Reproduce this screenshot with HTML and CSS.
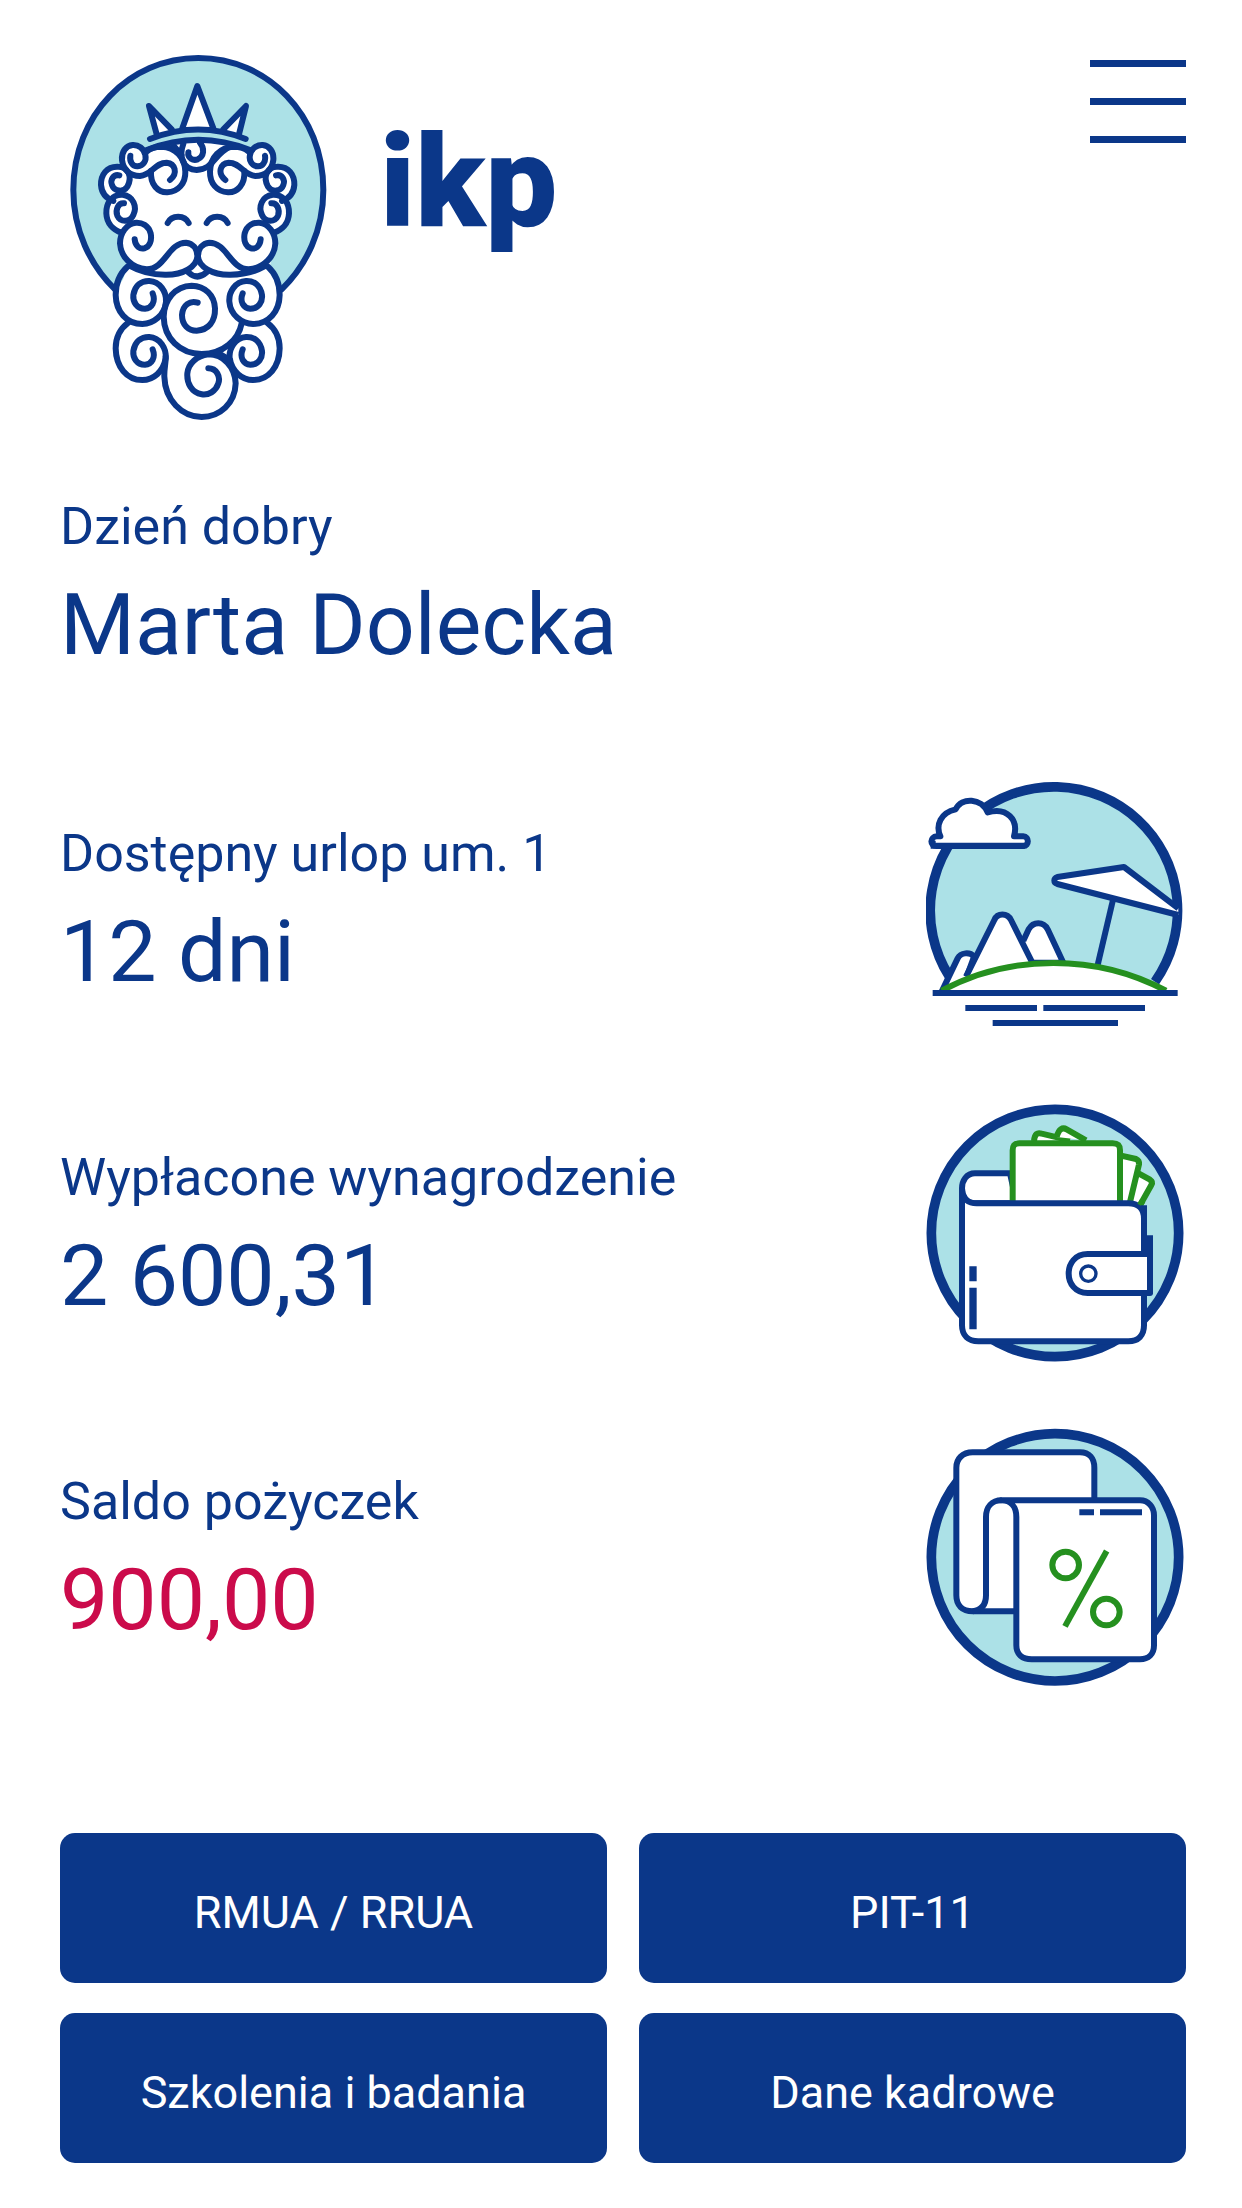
FILE: index.html
```
<!DOCTYPE html>
<html lang="pl">
<head>
    <meta charset="utf-8">
    <meta name="viewport" content="width=device-width, initial-scale=1">
    <title>ikp</title>
    <link rel="stylesheet" href="styles.css">
</head>
<body>
    <header class="header">
        <a class="brand" href="#">
            <svg class="brand-logo" viewBox="30 30 810 1110" aria-hidden="true">
                <defs>
                    <g id="side-fill">
                        <circle cx="250" cy="360" r="40" />
                        <circle cx="198" cy="430" r="45" />
                        <circle cx="218" cy="520" r="50" />
                        <circle cx="268" cy="618" r="58" />
                        <circle cx="272" cy="772" r="75" />
                        <circle cx="272" cy="943" r="75" />
                    </g>
                    <g id="side-curls">
                        <path d="M241 347C238 365 248 380 263 379C280 378 290 362 286 345C282 325 265 314 248 315C228 317 214 335 216 360C220 390 240 408 270 408C305 405 315 368 350 368C375 370 385 400 360 420" />
                        <path d="M303 393C300 435 325 458 352 457C385 455 407 430 406 395C405 350 375 322 335 320C315 320 300 325 290 335" />
                        <path d="M208 406C190 402 180 420 186 435C193 455 220 458 232 440C248 412 235 380 205 380C170 378 152 405 153 435C155 460 168 475 190 483" />
                        <path d="M222 490C205 488 195 510 202 527C212 548 240 547 250 525C262 500 250 468 218 464C185 462 168 490 169 520C170 550 190 570 215 578" />
                        <path d="M254 598C256 620 270 628 283 625C300 620 306 600 302 580C295 555 275 547 258 548C230 550 210 580 210 610C212 650 245 685 290 688C345 688 355 608 408 608C428 610 442 625 442 650C440 680 400 705 345 704C310 704 270 695 240 678" />
                        <path d="M308 760C318 785 305 805 285 806C260 806 248 785 250 765C255 735 275 722 298 723C330 725 350 755 348 785C345 825 310 852 277 852C230 852 198 815 197 765C197 725 210 700 232 680" />
                        <path d="M308 928C318 953 305 973 285 974C260 974 248 953 250 933C255 903 275 890 298 891C330 893 350 925 347 955C340 995 310 1020 277 1020C230 1020 198 980 197 925C197 890 212 865 235 848" />
                        <path d="M353 549C365 524 404 524 416 549" />
                    </g>
                </defs>
                <path class="line tint" d="M195 748C120 675 70 570 70 450C70 225 238 54 445 54C652 54 820 225 820 450C820 570 770 675 695 748" />
                <g class="paper">
                    <path d="M290 330Q445 268 600 330L640 400 690 440 680 540 660 680 685 760 640 850 685 930 600 1010 550 1030C550 1090 510 1128 455 1128C400 1128 345 1080 343 1010L280 1010 205 930 235 850 205 760 232 680 215 578 190 483 200 400Z" />
                    <use href="#side-fill" />
                    <use href="#side-fill" transform="translate(886 0) scale(-1 1)" />
                </g>
                <!-- crown -->
                <g class="line paper">
                    <path d="M320 283L297 198 365 268" />
                    <path d="M397 265L442 138 490 265" />
                    <path d="M520 268L588 198 567 283" />
                </g>
                <path class="tint" d="M300 297Q445 240 587 297L600 330Q445 268 290 330Z" />
                <path class="line" d="M300 297Q445 240 587 297" />
                <path class="line" d="M290 330Q445 268 600 330" />
                <g class="line">
                    <use href="#side-curls" />
                    <use href="#side-curls" transform="translate(886 0) scale(-1 1)" />
                    <path d="M415 337C412 355 430 363 443 358C462 350 465 325 450 308" />
                    <path d="M400 312C385 350 400 390 440 390C490 388 490 345 540 320" />
                    <path d="M370 316L394 345" />
                    <path d="M415 697Q442 722 470 697" />
                    <!-- beard -->
                    <path d="M443 788C420 780 398 795 396 825C396 855 415 872 440 872C475 870 496 845 495 805C493 765 465 738 425 737C375 738 342 780 341 830C342 895 390 942 455 942C520 942 565 900 575 850" />
                    <path d="M475 985C500 985 512 1010 505 1030C497 1055 475 1066 455 1063C425 1058 410 1030 412 1000C415 970 440 948 475 943C520 943 555 980 557 1030C555 1090 510 1130 455 1131C395 1130 345 1080 343 1010C342 985 348 970 347 950" />
                    <path d="M500 936L540 960" />
                </g>
            </svg>
            <span class="brand-name">ikp</span>
        </a>
        <button class="menu-button" type="button" aria-label="Menu">
            <span class="menu-line"></span>
            <span class="menu-line"></span>
            <span class="menu-line"></span>
        </button>
    </header>

    <main class="content">
        <section class="greeting">
            <p class="label">Dzień dobry</p>
            <h1 class="value">Marta Dolecka</h1>
        </section>

        <section class="summary">
            <div class="summary-row">
                <div class="summary-text">
                    <p class="label">Dostępny urlop um. 1</p>
                    <p class="value">12 dni</p>
                </div>
                <svg class="summary-icon" viewBox="48 30 780 780" aria-hidden="true">
                    <path class="tint" d="M117 618A371 371 0 1 1 735 635L755 655H100Z" />
                    <path class="ring" d="M117 618A371 371 0 1 1 735 635" />
                    <!-- cloud -->
                    <path class="line paper" d="M80 199C60 200 58 228 80 228H340C358 228 358 199 340 199H312C326 150 292 110 233 127C215 84 155 80 137 118C92 128 76 165 91 199Z" />
                    <path class="line" d="M62 227H345M68 212V220" />
                    <!-- mountains -->
                    <path class="line paper" d="M95 665L143 565C152 547 180 545 192 560L170 620" />
                    <path class="line paper" d="M340 512L356 478C370 454 400 454 413 478L460 578H360" />
                    <path class="line paper" d="M168 620L253 450C262 428 292 428 303 450L368 580" />
                    <!-- umbrella -->
                    <path class="line" d="M610 385L563 585" />
                    <path class="line paper" d="M805 415L642 291 442 321C430 325 430 338 442 342L805 435" />
                    <path class="line paper green" d="M95 662C300 551 560 551 768 662" />
                    <path class="line" d="M68 669H803M166 714H381M400 714H705M248 759H624" />
                </svg>
            </div>

            <div class="summary-row">
                <div class="summary-text">
                    <p class="label">Wypłacone wynagrodzenie</p>
                    <p class="value">2 600,31</p>
                </div>
                <svg class="summary-icon" viewBox="48 41 780 780" aria-hidden="true">
                    <circle class="ring tint" cx="435" cy="428" r="371" />
                    <path class="line paper" d="M300 249H195C143 249 143 339 195 339H320Z" />
                    <!-- banknotes -->
                    <g class="line paper green">
                        <path d="M690 345L724 284C728 277 726 272 720 268L680 246 650 340" />
                        <path d="M660 335L687 222C688 213 685 209 678 206L630 195V335" />
                        <path d="M372 152C374 130 382 126 395 130L480 150" />
                        <path d="M440 140C446 115 458 110 470 117L528 150" />
                        <path d="M308 340V180C308 164 314 159 328 159H608C624 159 630 165 630 180V340" />
                    </g>
                    <!-- wallet -->
                    <path class="line paper" d="M156 300V705C156 735 175 753 205 753H655C685 753 702 735 702 705V385C702 355 685 339 655 339H200C175 339 156 325 156 300Z" />
                    <path class="line green" d="M690 345L698 331" />
                    <path class="line" d="M702 345V400M720 435V610" />
                    <path class="line paper" d="M720 491H533C457 491 457 608 533 608H720Z" />
                    <circle class="thin" cx="535" cy="550" r="23" />
                    <path class="line wide" d="M189 528V573M189 592V717" />
                </svg>
            </div>

            <div class="summary-row">
                <div class="summary-text">
                    <p class="label">Saldo pożyczek</p>
                    <p class="value value-negative">900,00</p>
                </div>
                <svg class="summary-icon" viewBox="48 53 780 780" aria-hidden="true">
                    <circle class="ring tint" cx="435" cy="441" r="371" />
                    <path class="paper" d="M553 270V172C553 144 538 126 510 126H188C157 126 139 146 139 172V555C139 585 157 603 188 603H330V270Z" />
                    <path class="line" d="M553 270V172C553 144 538 126 510 126H188C157 126 139 146 139 172V555C139 585 157 603 188 603H320" />
                    <path class="line" d="M188 603C212 600 228 585 228 555V320C228 290 245 270 275 270" />
                    <path class="line paper" d="M274 270H690C715 270 732 290 732 315V705C732 732 715 747 690 747H365C337 747 319 732 319 705V320C319 290 303 270 274 270Z" />
                    <path class="line" d="M508 306H552M570 306H696" />
                    <!-- percent sign -->
                    <g class="line paper green">
                        <circle cx="467" cy="464" r="40" />
                        <circle cx="589" cy="605" r="40" />
                        <path d="M590 422L465 648" />
                    </g>
                </svg>
            </div>
        </section>

        <nav class="actions">
            <button class="action-button" type="button">RMUA / RRUA</button>
            <button class="action-button" type="button">PIT-11</button>
            <button class="action-button" type="button">Szkolenia i badania</button>
            <button class="action-button" type="button">Dane kadrowe</button>
        </nav>
    </main>
</body>
</html>
```
FILE: styles.css
```
:root {
    --primary: #0b3789;
    --tint: #ace1e7;
    --green: #25901f;
    --negative: #cb0b4b;
}

* {
    box-sizing: border-box;
}

body {
    margin: 0;
    background: #fff;
    color: var(--primary);
    font-family: Roboto, 'Liberation Sans', sans-serif;
}

.header {
    display: flex;
    justify-content: space-between;
    align-items: flex-start;
    padding: 50px 56px 0 60px;
}

.brand {
    display: flex;
    align-items: flex-start;
    gap: 50px;
    color: inherit;
    text-decoration: none;
}

.brand-logo {
    width: 270px;
    height: 370px;
}

.brand-name {
    padding-top: 68px;
    font-size: 128px;
    font-weight: 900;
    line-height: 128px;
}

.menu-button {
    display: flex;
    flex-direction: column;
    justify-content: space-between;
    width: 96px;
    height: 83px;
    margin-top: 10px;
    padding: 0;
    border: 0;
    background: none;
    cursor: pointer;
}

.menu-line {
    width: 100%;
    height: 7px;
    background: var(--primary);
}

.content {
    padding: 0 56px 45px 60px;
}

.greeting {
    padding: 75px 0 101px;
}

.label {
    margin: 0 0 12px;
    font-size: 52px;
    line-height: 64px;
}

.value {
    margin: 0;
    font-size: 86px;
    font-weight: 400;
    line-height: 108px;
}

.value-negative {
    color: var(--negative);
}

.summary {
    display: flex;
    flex-direction: column;
    gap: 64px;
}

.summary-row {
    display: flex;
    justify-content: space-between;
    align-items: center;
}

.summary-text {
    padding-top: 8px;
}

.summary-icon {
    flex: none;
    width: 260px;
    height: 260px;
}

.actions {
    display: grid;
    grid-template-columns: 1fr 1fr;
    gap: 30px 32px;
    margin-top: 145px;
}

.action-button {
    height: 150px;
    padding: 8px 16px 0;
    border: 0;
    border-radius: 15px;
    background: var(--primary);
    color: #fff;
    font-family: inherit;
    font-size: 45px;
    cursor: pointer;
}

/* drawings */
.line,
.ring,
.thin {
    fill: none;
    stroke: var(--primary);
    stroke-width: 18;
    stroke-linejoin: round;
}

.brand-logo .line {
    stroke-linecap: round;
}

.ring {
    stroke-width: 29;
}

.thin {
    stroke-width: 10;
}

.wide {
    stroke-width: 22;
}

.paper {
    fill: #fff;
}

.tint {
    fill: var(--tint);
}

.green {
    stroke: var(--green);
}
```
